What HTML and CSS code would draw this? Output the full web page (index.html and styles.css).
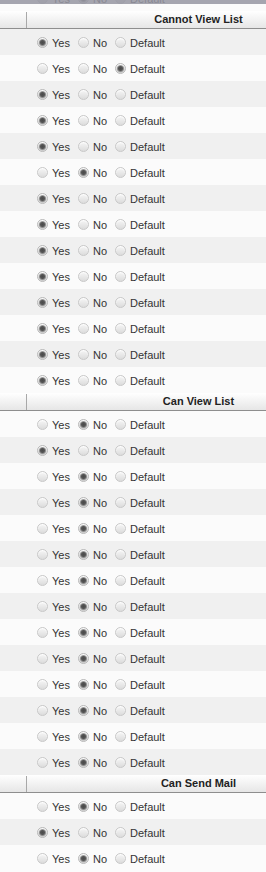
FILE: index.html
```html
<!DOCTYPE html>
<html>
<head>
<meta charset="utf-8">
<title>Permissions</title>
<link rel="stylesheet" href="styles.css">
</head>
<body>
<div class="topbar"></div>
<div class="perms">
	<div class="row stub"><label><input type="radio" name="r0"><span>Yes</span></label><label><input type="radio" name="r0" checked><span>No</span></label><label><input type="radio" name="r0"><span>Default</span></label></div>

	<div class="head"><span class="gutter"></span><span class="title">Cannot View List</span></div>
	<div class="row alt"><label><input type="radio" name="a1" checked><span>Yes</span></label><label><input type="radio" name="a1"><span>No</span></label><label><input type="radio" name="a1"><span>Default</span></label></div>
	<div class="row"><label><input type="radio" name="a2"><span>Yes</span></label><label><input type="radio" name="a2"><span>No</span></label><label><input type="radio" name="a2" checked><span>Default</span></label></div>
	<div class="row alt"><label><input type="radio" name="a3" checked><span>Yes</span></label><label><input type="radio" name="a3"><span>No</span></label><label><input type="radio" name="a3"><span>Default</span></label></div>
	<div class="row"><label><input type="radio" name="a4" checked><span>Yes</span></label><label><input type="radio" name="a4"><span>No</span></label><label><input type="radio" name="a4"><span>Default</span></label></div>
	<div class="row alt"><label><input type="radio" name="a5" checked><span>Yes</span></label><label><input type="radio" name="a5"><span>No</span></label><label><input type="radio" name="a5"><span>Default</span></label></div>
	<div class="row"><label><input type="radio" name="a6"><span>Yes</span></label><label><input type="radio" name="a6" checked><span>No</span></label><label><input type="radio" name="a6"><span>Default</span></label></div>
	<div class="row alt"><label><input type="radio" name="a7" checked><span>Yes</span></label><label><input type="radio" name="a7"><span>No</span></label><label><input type="radio" name="a7"><span>Default</span></label></div>
	<div class="row"><label><input type="radio" name="a8" checked><span>Yes</span></label><label><input type="radio" name="a8"><span>No</span></label><label><input type="radio" name="a8"><span>Default</span></label></div>
	<div class="row alt"><label><input type="radio" name="a9" checked><span>Yes</span></label><label><input type="radio" name="a9"><span>No</span></label><label><input type="radio" name="a9"><span>Default</span></label></div>
	<div class="row"><label><input type="radio" name="a10" checked><span>Yes</span></label><label><input type="radio" name="a10"><span>No</span></label><label><input type="radio" name="a10"><span>Default</span></label></div>
	<div class="row alt"><label><input type="radio" name="a11" checked><span>Yes</span></label><label><input type="radio" name="a11"><span>No</span></label><label><input type="radio" name="a11"><span>Default</span></label></div>
	<div class="row"><label><input type="radio" name="a12" checked><span>Yes</span></label><label><input type="radio" name="a12"><span>No</span></label><label><input type="radio" name="a12"><span>Default</span></label></div>
	<div class="row alt"><label><input type="radio" name="a13" checked><span>Yes</span></label><label><input type="radio" name="a13"><span>No</span></label><label><input type="radio" name="a13"><span>Default</span></label></div>
	<div class="row"><label><input type="radio" name="a14" checked><span>Yes</span></label><label><input type="radio" name="a14"><span>No</span></label><label><input type="radio" name="a14"><span>Default</span></label></div>

	<div class="head"><span class="gutter"></span><span class="title">Can View List</span></div>
	<div class="row"><label><input type="radio" name="b1"><span>Yes</span></label><label><input type="radio" name="b1" checked><span>No</span></label><label><input type="radio" name="b1"><span>Default</span></label></div>
	<div class="row alt"><label><input type="radio" name="b2" checked><span>Yes</span></label><label><input type="radio" name="b2"><span>No</span></label><label><input type="radio" name="b2"><span>Default</span></label></div>
	<div class="row"><label><input type="radio" name="b3"><span>Yes</span></label><label><input type="radio" name="b3" checked><span>No</span></label><label><input type="radio" name="b3"><span>Default</span></label></div>
	<div class="row alt"><label><input type="radio" name="b4"><span>Yes</span></label><label><input type="radio" name="b4" checked><span>No</span></label><label><input type="radio" name="b4"><span>Default</span></label></div>
	<div class="row"><label><input type="radio" name="b5"><span>Yes</span></label><label><input type="radio" name="b5" checked><span>No</span></label><label><input type="radio" name="b5"><span>Default</span></label></div>
	<div class="row alt"><label><input type="radio" name="b6"><span>Yes</span></label><label><input type="radio" name="b6" checked><span>No</span></label><label><input type="radio" name="b6"><span>Default</span></label></div>
	<div class="row"><label><input type="radio" name="b7"><span>Yes</span></label><label><input type="radio" name="b7" checked><span>No</span></label><label><input type="radio" name="b7"><span>Default</span></label></div>
	<div class="row alt"><label><input type="radio" name="b8"><span>Yes</span></label><label><input type="radio" name="b8" checked><span>No</span></label><label><input type="radio" name="b8"><span>Default</span></label></div>
	<div class="row"><label><input type="radio" name="b9"><span>Yes</span></label><label><input type="radio" name="b9" checked><span>No</span></label><label><input type="radio" name="b9"><span>Default</span></label></div>
	<div class="row alt"><label><input type="radio" name="b10"><span>Yes</span></label><label><input type="radio" name="b10" checked><span>No</span></label><label><input type="radio" name="b10"><span>Default</span></label></div>
	<div class="row"><label><input type="radio" name="b11"><span>Yes</span></label><label><input type="radio" name="b11" checked><span>No</span></label><label><input type="radio" name="b11"><span>Default</span></label></div>
	<div class="row alt"><label><input type="radio" name="b12"><span>Yes</span></label><label><input type="radio" name="b12" checked><span>No</span></label><label><input type="radio" name="b12"><span>Default</span></label></div>
	<div class="row"><label><input type="radio" name="b13"><span>Yes</span></label><label><input type="radio" name="b13" checked><span>No</span></label><label><input type="radio" name="b13"><span>Default</span></label></div>
	<div class="row alt"><label><input type="radio" name="b14"><span>Yes</span></label><label><input type="radio" name="b14" checked><span>No</span></label><label><input type="radio" name="b14"><span>Default</span></label></div>

	<div class="head"><span class="gutter"></span><span class="title">Can Send Mail</span></div>
	<div class="row"><label><input type="radio" name="c1"><span>Yes</span></label><label><input type="radio" name="c1" checked><span>No</span></label><label><input type="radio" name="c1"><span>Default</span></label></div>
	<div class="row alt"><label><input type="radio" name="c2" checked><span>Yes</span></label><label><input type="radio" name="c2"><span>No</span></label><label><input type="radio" name="c2"><span>Default</span></label></div>
	<div class="row"><label><input type="radio" name="c3"><span>Yes</span></label><label><input type="radio" name="c3" checked><span>No</span></label><label><input type="radio" name="c3"><span>Default</span></label></div>
</div>
</body>
</html>
```

FILE: styles.css
```css
html, body
{
	margin: 0;
	overflow: hidden;
	background: #fbfbfb;
}

.perms
{
	width: 100%;
	overflow: hidden;
	font-family: "Liberation Sans", Arial, sans-serif;
	font-size: 11px;
	color: #333;
}

/* grey bar of the window above, lies over the first row */
.topbar
{
	position: fixed;
	top: 0;
	left: 0;
	right: 0;
	height: 4px;
	background: rgba(150, 150, 162, 0.86);
	z-index: 2;
}

.head
{
	display: flex;
	height: 17px;
	border-bottom: 1px solid #8e8e8e;
	background: linear-gradient(#ffffff, #e6e6e6);
}

.gutter
{
	flex: none;
	width: 26px;
	margin-top: 1px;
	border-right: 1px solid #a8a8a8;
}

/* the table runs on past the right edge, the title is centred in the full cell */
.title
{
	flex: none;
	width: 343px;
	line-height: 17px;
	text-align: center;
	font-weight: bold;
	color: #222;
}

.row
{
	display: flex;
	align-items: center;
	box-sizing: border-box;
	height: 26px;
	padding-left: 37px;
	background: #fbfbfb;
}

.row.alt
{
	background: #f0f0f0;
}

.stub
{
	margin-top: -15px;
}

.row label
{
	display: inline-flex;
	align-items: center;
	margin-right: 8px;
}

.row span
{
	padding-top: 2px;
}

.row input
{
	appearance: none;
	-webkit-appearance: none;
	width: 11px;
	height: 11px;
	margin: 0 4px 0 0;
	border: 1px solid #c8c8c8;
	border-radius: 50%;
	background: linear-gradient(#f6f6f6, #dcdcdc);
	box-shadow: inset 0 1px 1px #fff;
}

.row input:checked
{
	border-color: #b8b8b8;
	background: radial-gradient(circle, #4a4a4a 0, #555 2px, #9a9a9a 3.2px, transparent 4.2px), linear-gradient(#eeeeee, #d6d6d6);
}
```
